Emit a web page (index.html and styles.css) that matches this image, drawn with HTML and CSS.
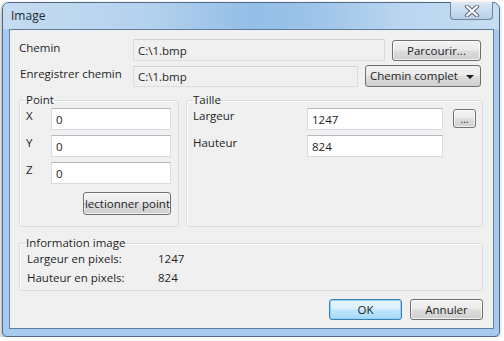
FILE: index.html
```html
<!DOCTYPE html>
<html lang="fr">
<head>
    <meta charset="UTF-8">
    <title>Image</title>
    <link rel="stylesheet" href="styles.css">
</head>
<body>

<div class="window">
    <div class="titlebar">
        <span class="title">Image</span>
        <div class="close">
            <svg width="18" height="12" viewBox="0 0 18 12">
                <path d="M4 1.5 L14 10.5 M14 1.5 L4 10.5" stroke="#5f6a78" stroke-width="4.2" stroke-linecap="round"/>
                <path d="M4 1.5 L14 10.5 M14 1.5 L4 10.5" stroke="#ffffff" stroke-width="2.2" stroke-linecap="round"/>
            </svg>
        </div>
    </div>

    <div class="client">
        <div class="row row-path">
            <span class="lbl">Chemin</span>
            <div class="field field-ro field-path">C:\1.bmp</div>
            <button class="btn btn-browse">Parcourir...</button>
        </div>

        <div class="row row-save">
            <span class="lbl lbl-save">Enregistrer chemin</span>
            <div class="field field-ro field-save">C:\1.bmp</div>
            <div class="combo">Chemin complet <span class="arrow"></span></div>
        </div>

        <div class="groups">
            <fieldset class="group group-point">
                <legend>Point</legend>
                <div class="pt-row">
                    <span class="pt-lbl">X</span>
                    <div class="field field-pt">0</div>
                </div>
                <div class="pt-row">
                    <span class="pt-lbl">Y</span>
                    <div class="field field-pt">0</div>
                </div>
                <div class="pt-row">
                    <span class="pt-lbl">Z</span>
                    <div class="field field-pt">0</div>
                </div>
                <button class="btn btn-select"><span>Sélectionner point</span></button>
            </fieldset>

            <fieldset class="group group-size">
                <legend>Taille</legend>
                <div class="sz-row">
                    <span class="sz-lbl">Largeur</span>
                    <div class="field field-sz">1247</div>
                    <button class="btn btn-dots">...</button>
                </div>
                <div class="sz-row">
                    <span class="sz-lbl">Hauteur</span>
                    <div class="field field-sz">824</div>
                </div>
            </fieldset>
        </div>

        <fieldset class="group group-info">
            <legend>Information image</legend>
            <div class="info-row">
                <span class="info-lbl">Largeur en pixels:</span>
                <span>1247</span>
            </div>
            <div class="info-row">
                <span class="info-lbl">Hauteur en pixels:</span>
                <span>824</span>
            </div>
        </fieldset>

        <div class="actions">
            <button class="btn btn-ok">OK</button>
            <button class="btn">Annuler</button>
        </div>
    </div>
</div>

</body>
</html>
```

FILE: styles.css
```css
body {
    margin: 0;
    background-color: #ffffff;
    font-family: "Open Sans", "Noto Sans", sans-serif;
    font-size: 11.5px;
    color: #1e1e1e;
}
.window {
    width: 496px;
    height: 333px;
    margin: 2px 0 0 2px;
    border: 1px solid #4e6a88;
    border-radius: 7px 7px 5px 5px;
    background: #a6cbee;
    box-shadow: -1px 2px 4px rgba(0, 0, 0, 0.35);
    display: flex;
    flex-direction: column;
}
.titlebar {
    height: 26px;
    display: flex;
    justify-content: space-between;
    border-radius: 6px 6px 0 0;
    background: linear-gradient(90deg, #c5dcf1 0%, #b3d1ee 30%, #93bee7 50%, #9cc3e9 62%, #b9d5f0 80%, #c6ddf2 100%);
}
.title {
    font-size: 12px;
    padding: 4px 0 0 8px;
    color: #1e2a36;
}
.close {
    width: 41px;
    height: 17px;
    margin: -1px 6px 0 0;
    border: 1px solid #6f8297;
    border-top: none;
    border-radius: 0 0 4px 4px;
    background: linear-gradient(#dfeaf5, #c9dcee 50%, #b7cfe6);
    display: flex;
    justify-content: center;
    align-items: center;
}
.close svg {
    display: block;
}
.client {
    width: 485px;
    height: 300px;
    margin: 0 0 0 6px;
    border: 1px solid #5f7d9c;
    background-color: #f0f0f0;
    box-sizing: border-box;
    padding: 9px 10px 0 9px;
}
.row {
    display: flex;
    align-items: center;
}
.row-save {
    margin-top: 4px;
}
.lbl {
    width: 114px;
    padding-bottom: 5px;
}
.lbl-save {
    padding-left: 1px;
    width: 113px;
}
.field {
    box-sizing: border-box;
    height: 22px;
    padding: 3px 0 0 4px;
    background-color: #ffffff;
    border: 1px solid #d8dde3;
    border-top-color: #b5b9bf;
}
.field-ro {
    background-color: #f0f0f0;
    border-color: #dcdcdc;
    border-top-color: #d0d0d0;
}
.field-path {
    width: 252px;
}
.field-save {
    width: 225px;
    height: 21px;
    padding-top: 2px;
}
.btn {
    box-sizing: border-box;
    height: 21px;
    padding: 0;
    border: 1px solid #707070;
    border-radius: 3px;
    background: linear-gradient(#f2f2f2 0%, #ebebeb 48%, #dddddd 52%, #cfcfcf 100%);
    font-family: inherit;
    font-size: 11.5px;
    color: #1e1e1e;
    box-shadow: inset 0 0 0 1px rgba(255, 255, 255, 0.7);
}
.btn-browse {
    width: 89px;
    margin-left: 7px;
}
.combo {
    box-sizing: border-box;
    width: 116px;
    height: 22px;
    margin-left: 7px;
    padding: 2px 0 0 4px;
    border: 1px solid #707070;
    border-radius: 3px;
    background: linear-gradient(#f2f2f2 0%, #ebebeb 48%, #dddddd 52%, #cfcfcf 100%);
    display: flex;
    justify-content: space-between;
}
.arrow {
    width: 0;
    height: 0;
    margin: 7px 6px 0 0;
    border-left: 4px solid transparent;
    border-right: 4px solid transparent;
    border-top: 4px solid #1e1e1e;
}
.groups {
    display: flex;
    gap: 7px;
    margin-top: 5px;
}
.group {
    margin: 0;
    padding: 0 6px;
    border: 1px solid #d5dfe5;
    border-radius: 3px;
    box-shadow: inset 1px 1px 0 #ffffff;
}
.group legend {
    padding: 0;
    line-height: 16px;
}
.group-point {
    width: 160px;
    height: 135px;
    box-sizing: border-box;
    display: flex;
    flex-direction: column;
}
.pt-row {
    display: flex;
    margin-bottom: 5px;
}
.pt-lbl {
    width: 25px;
    margin-top: 0px;
}
.field-pt {
    width: 120px;
}
.btn-select {
    width: 88px;
    height: 23px;
    margin: 3px 0 0 57px;
    overflow: hidden;
    display: flex;
    justify-content: flex-end;
    white-space: nowrap;
}
.btn-select span {
    padding: 3px 0 0 0;
}
.group-size {
    width: 297px;
    height: 135px;
    box-sizing: border-box;
}
.sz-row {
    display: flex;
    margin-bottom: 5px;
}
.sz-lbl {
    width: 114px;
}
.field-sz {
    width: 136px;
}
.btn-dots {
    width: 23px;
    height: 19px;
    margin: 1px 0 0 10px;
    font-size: 10px;
}
.group-info {
    width: 464px;
    height: 56px;
    box-sizing: border-box;
    margin-top: 8px;
}
.info-row {
    display: flex;
    line-height: 16px;
    margin-bottom: 3px;
    padding-left: 1px;
}
.info-lbl {
    width: 131px;
}
.actions {
    display: flex;
    justify-content: flex-end;
    gap: 8px;
    margin-top: 8px;
}
.actions .btn {
    width: 73px;
}
.btn-ok {
    border-color: #3c7fb1;
    background: linear-gradient(#eaf6fd 0%, #d9f0fc 48%, #bee6fd 52%, #a7d9f5 100%);
    box-shadow: inset 0 0 0 1px #8fd3f5;
}
```
